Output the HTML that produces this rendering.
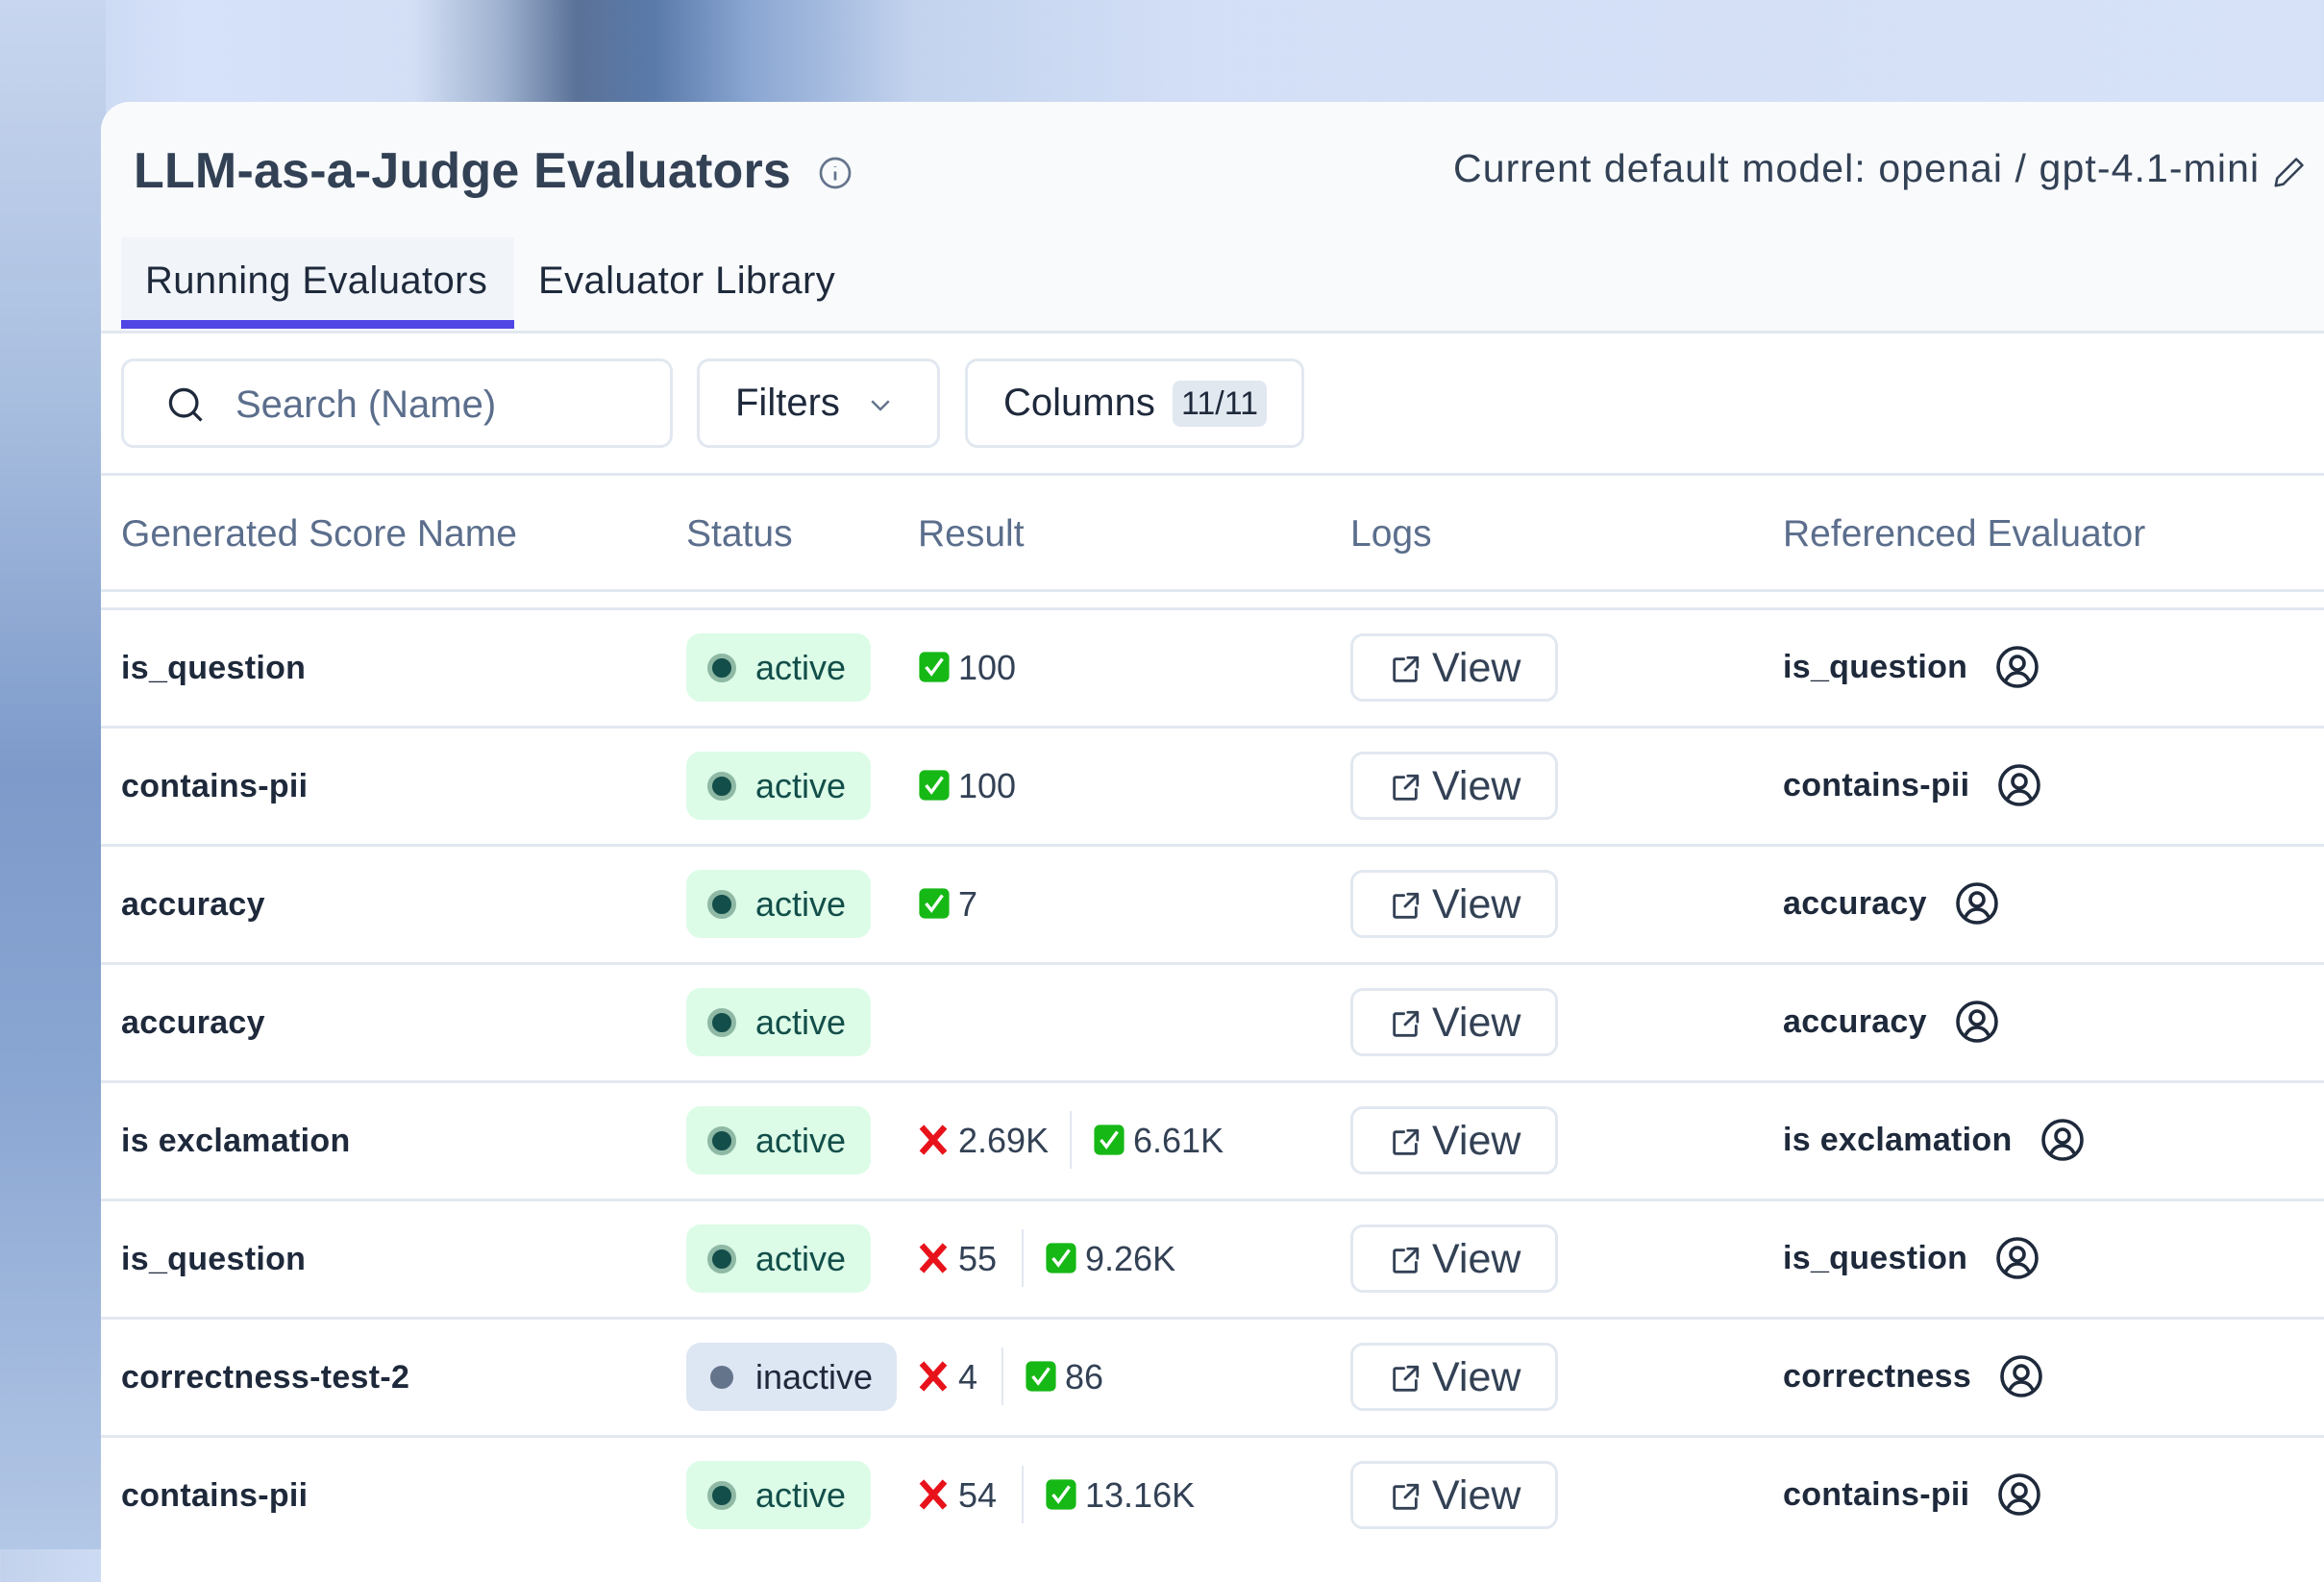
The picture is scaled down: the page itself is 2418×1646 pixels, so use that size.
<!DOCTYPE html>
<html><head><meta charset="utf-8"><style>
*{box-sizing:border-box;margin:0;padding:0}
body{width:2418px;height:1612px;overflow:hidden;position:relative;font-family:"Liberation Sans",sans-serif;color:#1e293b;
background:linear-gradient(90deg,#c3d2ec 0px,#d6e2fa 200px,#d3dff5 430px,#9fb2d0 520px,#5b7298 600px,#5a7aaa 680px,#8aa6d2 780px,#c3d3ee 950px,#d3dff6 1250px,#d7e2f8 2418px);}
.left{position:absolute;left:0;top:0;width:110px;height:1612px;background:linear-gradient(180deg,#c8d6ef 0%,#a9bfe0 25%,#7d9aca 50%,#8aa6d2 70%,#b3c7e6 100%)}
.card{position:absolute;left:105px;top:106px;width:2340px;height:1540px;background:#fff;border-radius:30px 0 0 0;overflow:hidden}
.hdr{position:absolute;left:0;top:0;width:100%;height:241px;background:#f8fafc;border-bottom:3px solid #e2e8f0}
.abs{position:absolute;white-space:nowrap}
.box{position:absolute;border:3px solid #e2e8f0;border-radius:13px;background:#fff}
.th{position:absolute;top:428px;font-size:39px;color:#5b6e8c;letter-spacing:0px;white-space:nowrap}
.line{position:absolute;left:0;width:100%;height:3px;background:#e2e8f0}
.name{position:absolute;font-size:34px;font-weight:bold;color:#1e293b;letter-spacing:0.3px;white-space:nowrap}
.ref{position:absolute;display:flex;align-items:center;font-size:34px;font-weight:bold;color:#1e293b;letter-spacing:0.3px;white-space:nowrap}
.ref svg{margin-left:28px}
.badge{position:absolute;height:71px;border-radius:15px;background:#dcfce7}
.badge .dot{position:absolute;left:22px;top:21px;width:30px;height:30px;border-radius:50%;background:#134e4a;border:5px solid #8fb9a5}
.badge span{position:absolute;left:72px;top:15px;font-size:36px;color:#134e4a}
.badge.in{background:#dde6f3}
.badge.in .dot{background:#64748b;border:none;width:24px;height:24px;left:25px;top:24px}
.badge.in span{color:#1e293b}
.num{position:absolute;font-size:36px;color:#334155}
.vb{position:absolute;width:216px;height:71px;border:3px solid #e2e8f0;border-radius:13px;background:#fff}
.vb span{position:absolute;left:82px;top:9px;font-size:43px;color:#334155}
.vb svg{position:absolute;left:37px;top:18px}
.sep{position:absolute;width:2px;height:60px;background:#e2e8f0}
</style></head><body>
<div class="left"></div>
<div class="card">
 <div class="hdr"></div>
 <div class="abs" style="left:34px;top:42px;font-size:52px;font-weight:bold;color:#334155;letter-spacing:0.2px">LLM-as-a-Judge Evaluators</div>
 <svg class="abs" style="left:746px;top:56px" width="36" height="36" viewBox="0 0 24 24" fill="none" stroke="#64748b" stroke-width="1.8"><circle cx="12" cy="12" r="10"/><path d="M12 11v6M12 7.5v.5"/></svg>
 <div class="abs" style="left:1407px;top:46px;font-size:41px;color:#334155;letter-spacing:1.1px">Current default model: openai / gpt-4.1-mini</div>
 <svg class="abs" style="left:2258px;top:54px" width="38" height="38" viewBox="0 0 24 24" fill="none" stroke="#334155" stroke-width="1.6" stroke-linejoin="round"><path d="M16.5 3.5l4 4L8 20l-5 1 1-5z"/></svg>
 <div class="abs" style="left:21px;top:141px;width:409px;height:95px;background:#f1f5f9"></div>
 <div class="abs" style="left:21px;top:227px;width:409px;height:9px;background:#4f46e5"></div>
 <div class="abs" style="left:46px;top:164px;font-size:40px;color:#1e293b;letter-spacing:0.4px">Running Evaluators</div>
 <div class="abs" style="left:455px;top:164px;font-size:40px;color:#1e293b;letter-spacing:0.4px">Evaluator Library</div>

 <div class="box" style="left:21px;top:267px;width:574px;height:93px"></div>
 <svg class="abs" style="left:66px;top:293px" width="44" height="44" viewBox="0 0 24 24" fill="none" stroke="#1e293b" stroke-width="1.8"><circle cx="11" cy="11" r="7.5"/><path d="M16.5 16.5l4.5 4.5"/></svg>
 <div class="abs" style="left:140px;top:293px;font-size:40px;color:#5b6e8c">Search (Name)</div>
 <div class="box" style="left:620px;top:267px;width:253px;height:93px"></div>
 <div class="abs" style="left:660px;top:291px;font-size:40px;color:#1e293b">Filters</div>
 <svg class="abs" style="left:796px;top:300px" width="30" height="30" viewBox="0 0 24 24" fill="none" stroke="#64748b" stroke-width="2"><path d="M5 9l7 7 7-7"/></svg>
 <div class="box" style="left:899px;top:267px;width:353px;height:93px"></div>
 <div class="abs" style="left:939px;top:291px;font-size:40px;color:#1e293b">Columns</div>
 <div class="abs" style="left:1115px;top:290px;width:98px;height:48px;background:#e2e8f0;border-radius:8px;font-size:34px;text-align:center;line-height:48px;color:#1e293b">11/11</div>

 <div class="line" style="top:386px"></div>
 <div class="th" style="left:21px">Generated Score Name</div>
 <div class="th" style="left:609px">Status</div>
 <div class="th" style="left:850px">Result</div>
 <div class="th" style="left:1300px">Logs</div>
 <div class="th" style="left:1750px">Referenced Evaluator</div>
 <div class="line" style="top:507px"></div>
 <div class="line" style="top:526px"></div>
 <div id="rows"></div>
</div>
<script>
var data=[
["is_question",1,[["c","100"]],"is_question"],
["contains-pii",1,[["c","100"]],"contains-pii"],
["accuracy",1,[["c","7"]],"accuracy"],
["accuracy",1,[],"accuracy"],
["is exclamation",1,[["x","2.69K"],["c","6.61K"]],"is exclamation"],
["is_question",1,[["x","55"],["c","9.26K"]],"is_question"],
["correctness-test-2",0,[["x","4"],["c","86"]],"correctness"],
["contains-pii",1,[["x","54"],["c","13.16K"]],"contains-pii"]];
var h="";
var chk='<svg width="34" height="34" viewBox="0 0 24 24"><rect x="1" y="1" width="22" height="22" rx="4" fill="#16b816"/><path d="M6 12l4 5 8-11" fill="none" stroke="#fff" stroke-width="2.4"/></svg>';
var crs='<svg width="36" height="36" viewBox="0 0 24 24"><path d="M4 3l16 18M20 3L4 21" stroke="#e8121b" stroke-width="4.2"/></svg>';
for(var i=0;i<8;i++){
 var d=data[i],cy=588+i*123;
 h+='<div class="name" style="left:21px;top:'+(cy-18)+'px">'+d[0]+'</div>';
 h+='<div class="badge'+(d[1]?'':' in')+'" style="left:609px;top:'+(cy-35)+'px;width:'+(d[1]?192:219)+'px"><div class="dot"></div><span>'+(d[1]?'active':'inactive')+'</span></div>';
 if(d[2].length==1){
  h+='<div class="abs" style="left:850px;top:'+(cy-17)+'px">'+chk+'</div><div class="num" style="left:892px;top:'+(cy-20)+'px">'+d[2][0][1]+'</div>';
 } else if(d[2].length==2){
  var xn=d[2][0][1];var w={"2.69K":92,"55":42,"4":21,"54":42}[xn];
  var sx=850+42+w+24;
  h+='<div class="abs" style="left:848px;top:'+(cy-18)+'px">'+crs+'</div><div class="num" style="left:892px;top:'+(cy-20)+'px">'+xn+'</div>';
  h+='<div class="sep" style="left:'+sx+'px;top:'+(cy-30)+'px"></div>';
  h+='<div class="abs" style="left:'+(sx+24)+'px;top:'+(cy-17)+'px">'+chk+'</div><div class="num" style="left:'+(sx+66)+'px;top:'+(cy-20)+'px">'+d[2][1][1]+'</div>';
 }
 h+='<div class="vb" style="left:1300px;top:'+(cy-35)+'px"><svg width="34" height="34" viewBox="0 0 24 24" fill="none" stroke="#334155" stroke-width="2" stroke-linecap="round" stroke-linejoin="round"><path d="M11 4H5a1 1 0 0 0-1 1v14a1 1 0 0 0 1 1h14a1 1 0 0 0 1-1v-6"/><path d="M14 3h7v7M21 3l-9 9"/></svg><span>View</span></div>';
 h+='<div class="ref" style="left:1750px;top:'+(cy-24)+'px;height:48px"><span>'+d[3]+'</span><svg width="48" height="48" viewBox="0 0 24 24" fill="none" stroke="#1e293b" stroke-width="1.8"><circle cx="12" cy="12" r="10"/><circle cx="12" cy="10" r="3.5"/><path d="M6 19c1.5-3 3.5-4 6-4s4.5 1 6 4"/></svg></div>';
 if(i<7) h+='<div class="line" style="top:'+(cy+61)+'px"></div>';
}
document.getElementById("rows").innerHTML=h;
</script>
</body></html>
